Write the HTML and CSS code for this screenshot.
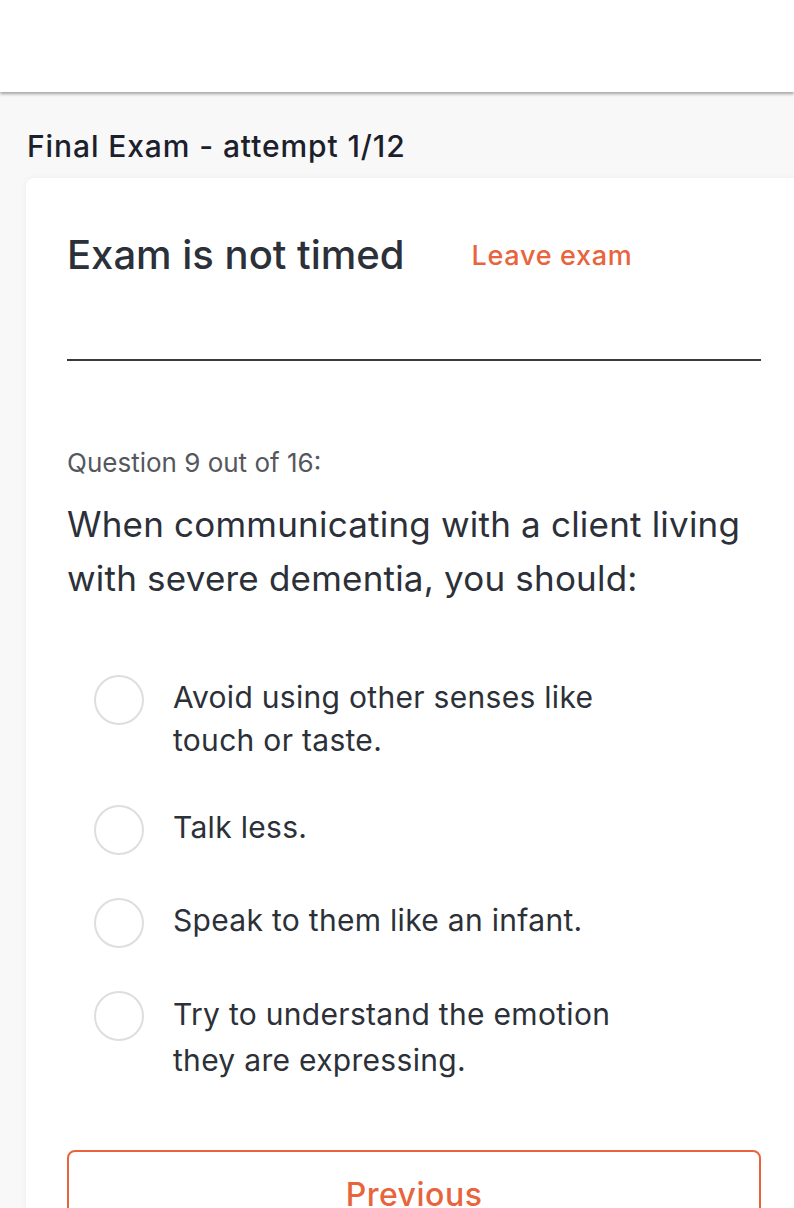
FILE: index.html
```html
<!DOCTYPE html>
<html>
<head>
<meta charset="utf-8">
<link rel="stylesheet" href="styles.css">
</head>
<body>
<header class="topbar"></header>
<main class="page">
  <h1 class="page-title">Final Exam - attempt 1/12</h1>
  <section class="card">
    <div class="card-head">
      <h2 class="timer">Exam is not timed</h2>
      <a class="leave">Leave exam</a>
    </div>
    <div class="divider"></div>
    <p class="q-count">Question 9 out of 16:</p>
    <p class="q-text">When communicating with a client living with severe dementia, you should:</p>
    <ul class="options">
      <li class="option"><span class="radio"></span><span class="opt-text">Avoid using other senses like touch or taste.</span></li>
      <li class="option"><span class="radio"></span><span class="opt-text">Talk less.</span></li>
      <li class="option"><span class="radio"></span><span class="opt-text">Speak to them like an infant.</span></li>
      <li class="option"><span class="radio"></span><span class="opt-text opt-loose">Try to understand the emotion they are expressing.</span></li>
    </ul>
    <button class="btn-prev">Previous</button>
  </section>
</main>
</body>
</html>
```

FILE: styles.css
```css
html, body {
  margin: 0;
  padding: 0;
  overflow: hidden;
  background: #f8f8f8;
  font-family: Inter, "Noto Sans", sans-serif;
}
.topbar {
  height: 92px;
  background: #ffffff;
  box-shadow: 0 2px 3px rgba(0,0,0,0.35);
  position: relative;
}
.page {
  padding-left: 26px;
}
.page-title {
  margin: 0;
  padding: 37px 0 0 1px;
  height: 49px;
  font-size: 30px;
  line-height: 34px;
  letter-spacing: 0.9px;
  font-weight: 500;
  color: #1b202b;
}
.card {
  width: 800px;
  box-sizing: border-box;
  background: #ffffff;
  border-radius: 8px;
  box-shadow: 0 0 6px rgba(0,0,0,0.05);
  padding: 54px 0 0 41px;
  height: 1100px;
}
.card-head {
  display: flex;
  align-items: center;
  height: 46px;
}
.timer {
  margin: 0;
  font-size: 40px;
  line-height: 46px;
  font-weight: 500;
  color: #2c3038;
}
.leave {
  margin-left: 67px;
  font-size: 27px;
  font-weight: 500;
  letter-spacing: 0.7px;
  color: #e8643c;
}
.divider {
  width: 694px;
  height: 2px;
  background: #3a3a3a;
  margin-top: 81px;
}
.q-count {
  margin: 86px 0 0;
  font-size: 26px;
  line-height: 32px;
  color: #54585e;
}
.q-text {
  margin: 18px 0 0;
  width: 694px;
  font-size: 35px;
  line-height: 54px;
  letter-spacing: 0.2px;
  color: #2c3038;
}
.options {
  list-style: none;
  margin: 70px 0 0;
  padding: 0 0 0 27px;
  display: flex;
  flex-direction: column;
  gap: 43px;
}
.option {
  display: flex;
  align-items: flex-start;
}
.radio {
  flex: none;
  width: 46px;
  height: 46px;
  border: 2px solid #dedede;
  border-radius: 50%;
}
.opt-text {
  margin-left: 29px;
  padding-top: 1px;
  width: 460px;
  font-size: 30px;
  line-height: 43px;
  letter-spacing: 0.3px;
  color: #2c3038;
}
.opt-loose {
  line-height: 46px;
  padding-top: 0;
}
.btn-prev {
  display: block;
  margin-top: 67px;
  width: 694px;
  height: 88px;
  background: #ffffff;
  border: 2px solid #e8643c;
  border-radius: 8px;
  color: #e8643c;
  font-family: Inter, "Noto Sans", sans-serif;
  font-size: 32px;
  font-weight: 500;
  letter-spacing: 0.5px;
  padding: 0;
}
```
